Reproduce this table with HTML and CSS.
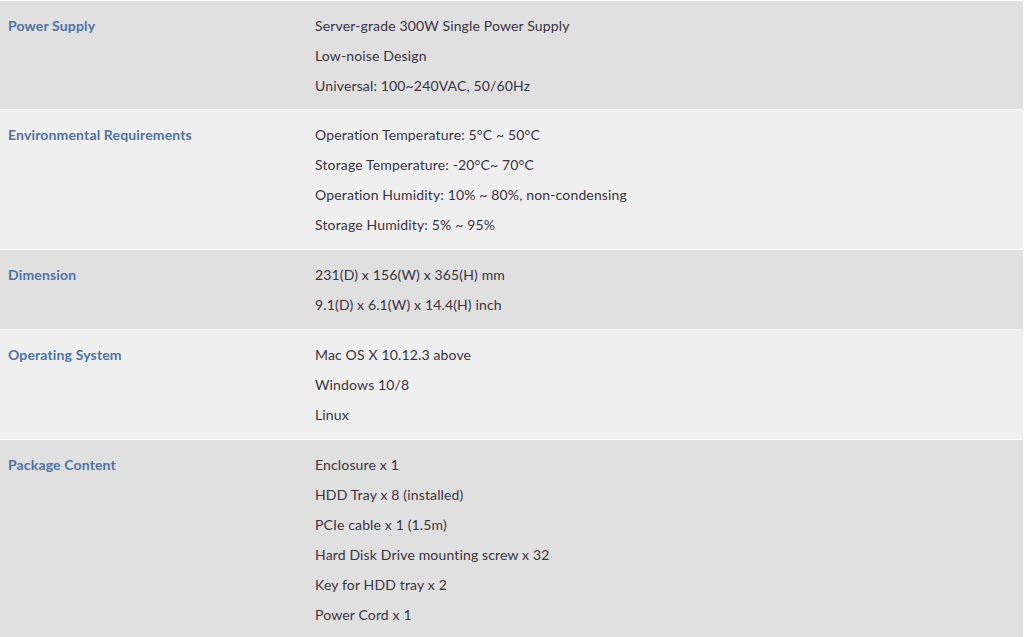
FILE: index.html
```html
<!DOCTYPE html>
<html>
<head>
<meta charset="utf-8">
<link rel="stylesheet" href="styles.css">
</head>
<body>
<div class="specs">
  <div class="row dark">
    <div class="label">Power Supply</div>
    <div class="values">
      <div>Server-grade 300W Single Power Supply</div>
      <div>Low-noise Design</div>
      <div>Universal: 100~240VAC, 50/60Hz</div>
    </div>
  </div>
  <div class="row light">
    <div class="label">Environmental Requirements</div>
    <div class="values">
      <div>Operation Temperature: 5°C ~ 50°C</div>
      <div>Storage Temperature: -20°C~ 70°C</div>
      <div>Operation Humidity: 10% ~ 80%, non-condensing</div>
      <div>Storage Humidity: 5% ~ 95%</div>
    </div>
  </div>
  <div class="row dark">
    <div class="label">Dimension</div>
    <div class="values">
      <div>231(D) x 156(W) x 365(H) mm</div>
      <div>9.1(D) x 6.1(W) x 14.4(H) inch</div>
    </div>
  </div>
  <div class="row light">
    <div class="label">Operating System</div>
    <div class="values">
      <div>Mac OS X 10.12.3 above</div>
      <div>Windows 10/8</div>
      <div>Linux</div>
    </div>
  </div>
  <div class="row dark">
    <div class="label">Package Content</div>
    <div class="values">
      <div>Enclosure x 1</div>
      <div>HDD Tray x 8 (installed)</div>
      <div>PCIe cable x 1 (1.5m)</div>
      <div>Hard Disk Drive mounting screw x 32</div>
      <div>Key for HDD tray x 2</div>
      <div>Power Cord x 1</div>
    </div>
  </div>
</div>
</body>
</html>
```
FILE: styles.css
```css
html, body {
  margin: 0;
  padding: 0;
  background: #ffffff;
}
body {
  font-family: Lato, "Open Sans", sans-serif;
  font-size: 14px;
  line-height: 30px;
  color: #3a3340;
  height: 637px;
  overflow: hidden;
  letter-spacing: 0.15px;
}
.specs {
  display: flex;
  flex-direction: column;
  gap: 1px;
  padding: 1px 1px 0 0;
  background: #ffffff;
}
.row {
  display: flex;
  padding: 10px 0 9px;
}
.row:first-child {
  padding-bottom: 8px;
}
.dark { background: #e0e0e0; }
.light { background: #efefef; }
.label {
  width: 307px;
  padding-left: 8px;
  color: #4d72a6;
  font-weight: 700;
}
.values {
  flex: 1;
}
```
